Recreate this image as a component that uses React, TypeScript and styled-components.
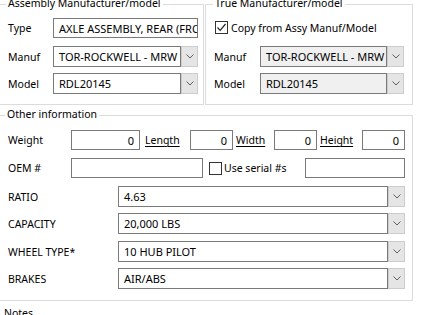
import React from "react";
import styled, { createGlobalStyle } from "styled-components";

const Global = createGlobalStyle`
  html, body { margin: 0; padding: 0; background: #fff; }
  body {
    font-family: "Noto Sans", "Segoe UI", sans-serif;
    font-size: 10.5px;
    color: #000;
    overflow: hidden;
  }
  * { box-sizing: border-box; }
`;

const Page = styled.div`
  width: 443px;
  height: 315px;
  overflow: hidden;
  padding-top: 4px;
`;

const TopRow = styled.div`
  display: flex;
  gap: 1px;
  margin-left: -1px;
`;

const GroupBox = styled.div<{ $w: number; $h: number; $pt: number; $pl: number; $mt?: number; $ml?: number }>`
  position: relative;
  width: ${(p) => p.$w}px;
  height: ${(p) => p.$h}px;
  margin-top: ${(p) => p.$mt ?? 0}px;
  margin-left: ${(p) => p.$ml ?? 0}px;
  border: 1px solid #dcdcdc;
  padding: ${(p) => p.$pt}px 0 0 ${(p) => p.$pl}px;
  display: flex;
  flex-direction: column;
`;

const Legend = styled.span<{ $left: number }>`
  position: absolute;
  top: -9px;
  left: ${(p) => p.$left}px;
  padding: 0 2px;
  background: #fff;
  line-height: 14px;
  white-space: nowrap;
`;

const Row = styled.div<{ $h: number; $mt?: number }>`
  display: flex;
  align-items: center;
  height: ${(p) => p.$h}px;
  margin-top: ${(p) => p.$mt ?? 0}px;
`;

const Label = styled.span<{ $w: number; $ml?: number; $u?: boolean }>`
  flex: none;
  width: ${(p) => p.$w}px;
  margin-left: ${(p) => p.$ml ?? 0}px;
  white-space: nowrap;
  text-decoration: ${(p) => (p.$u ? "underline" : "none")};
  text-underline-offset: 2px;
`;

const TextBox = styled.div<{ $w: number; $h?: number; $right?: boolean; $bg?: string }>`
  flex: none;
  width: ${(p) => p.$w}px;
  height: ${(p) => p.$h ?? 20}px;
  border: 1px solid #7a7a7a;
  background: ${(p) => p.$bg ?? "#fff"};
  display: flex;
  align-items: center;
  justify-content: ${(p) => (p.$right ? "flex-end" : "flex-start")};
  padding: 0 5px;
  overflow: hidden;
  white-space: nowrap;
  font-size: 11px;
`;

const ComboWrap = styled.div<{ $w: number }>`
  flex: none;
  display: flex;
  width: ${(p) => p.$w}px;
  height: 21px;
`;

const ComboField = styled.div<{ $bg?: string }>`
  flex: 1;
  min-width: 0;
  border: 1px solid #7a7a7a;
  background: ${(p) => p.$bg ?? "#fff"};
  display: flex;
  align-items: center;
  padding: 0 5px;
  overflow: hidden;
  white-space: nowrap;
  font-size: 11px;
`;

const ComboButton = styled.div`
  flex: none;
  width: 17px;
  border: 1px solid #cccccc;
  background: #e5e5e5;
  display: flex;
  align-items: center;
  justify-content: center;
`;

const Check = styled.div<{ $ml?: number }>`
  flex: none;
  width: 13px;
  height: 13px;
  margin-left: ${(p) => p.$ml ?? 0}px;
  border: 1px solid #333;
  background: #fff;
  display: flex;
  align-items: center;
  justify-content: center;
`;

const Notes = styled.div`
  margin-top: 5px;
  padding-left: 4px;
  line-height: 14px;
`;

const Chevron = () => (
  <svg width="8" height="5" viewBox="0 0 8 5">
    <path d="M0.5 0.5 L4 4 L7.5 0.5" fill="none" stroke="#606060" strokeWidth="1" />
  </svg>
);

const Combo: React.FC<{ w: number; value: string; bg?: string }> = ({ w, value, bg }) => (
  <ComboWrap $w={w}>
    <ComboField $bg={bg}>{value}</ComboField>
    <ComboButton>
      <Chevron />
    </ComboButton>
  </ComboWrap>
);

const CheckBox: React.FC<{ checked?: boolean; ml?: number }> = ({ checked, ml }) => (
  <Check $ml={ml}>
    {checked && (
      <svg width="11" height="11" viewBox="0 0 11 11">
        <path d="M1.5 5.5 L4.2 8.3 L9.5 2" fill="none" stroke="#222" strokeWidth="1.2" />
      </svg>
    )}
  </Check>
);

export default function App() {
  return (
    <>
      <Global />
      <Page>
        <TopRow>
          <GroupBox $w={205} $h={101} $pt={13} $pl={8}>
            <Legend $left={6}>Assembly Manufacturer/model</Legend>
            <Row $h={20}>
              <Label $w={45}>Type</Label>
              <TextBox $w={145}>AXLE ASSEMBLY, REAR (FRONT)</TextBox>
            </Row>
            <Row $h={21} $mt={8}>
              <Label $w={45}>Manuf</Label>
              <Combo w={145} value="TOR-ROCKWELL - MRW" />
            </Row>
            <Row $h={21} $mt={6}>
              <Label $w={45}>Model</Label>
              <Combo w={145} value="RDL20145" />
            </Row>
          </GroupBox>
          <GroupBox $w={208} $h={101} $pt={16} $pl={8}>
            <Legend $left={7}>True Manufacturer/model</Legend>
            <Row $h={13}>
              <CheckBox checked ml={1} />
              <Label $w={170} $ml={3}>Copy from Assy Manuf/Model</Label>
            </Row>
            <Row $h={21} $mt={12}>
              <Label $w={46}>Manuf</Label>
              <Combo w={144} value="TOR-ROCKWELL - MRW" bg="#f0f0f0" />
            </Row>
            <Row $h={21} $mt={6}>
              <Label $w={46}>Model</Label>
              <Combo w={144} value="RDL20145" bg="#f0f0f0" />
            </Row>
          </GroupBox>
        </TopRow>
        <GroupBox $w={414} $h={186} $pt={14} $pl={8} $mt={10} $ml={-1}>
          <Legend $left={5}>Other information</Legend>
          <Row $h={20}>
            <Label $w={63}>Weight</Label>
            <TextBox $w={69} $right>0</TextBox>
            <Label $w={45} $ml={5} $u>Length</Label>
            <TextBox $w={43} $right>0</TextBox>
            <Label $w={38} $ml={3} $u>Width</Label>
            <TextBox $w={43} $right>0</TextBox>
            <Label $w={42} $ml={3} $u>Height</Label>
            <TextBox $w={43} $right>0</TextBox>
          </Row>
          <Row $h={20} $mt={8}>
            <Label $w={63}>OEM #</Label>
            <TextBox $w={132} />
            <CheckBox ml={6} />
            <Label $w={81} $ml={2}>Use serial #s</Label>
            <TextBox $w={100} />
          </Row>
          <Row $h={21} $mt={8}>
            <Label $w={110}>RATIO</Label>
            <Combo w={287} value="4.63" />
          </Row>
          <Row $h={21} $mt={6}>
            <Label $w={110}>CAPACITY</Label>
            <Combo w={287} value="20,000 LBS" />
          </Row>
          <Row $h={21} $mt={7}>
            <Label $w={110}>WHEEL TYPE*</Label>
            <Combo w={287} value="10 HUB PILOT" />
          </Row>
          <Row $h={21} $mt={6}>
            <Label $w={110}>BRAKES</Label>
            <Combo w={287} value="AIR/ABS" />
          </Row>
        </GroupBox>
        <Notes>Notes</Notes>
      </Page>
    </>
  );
}
